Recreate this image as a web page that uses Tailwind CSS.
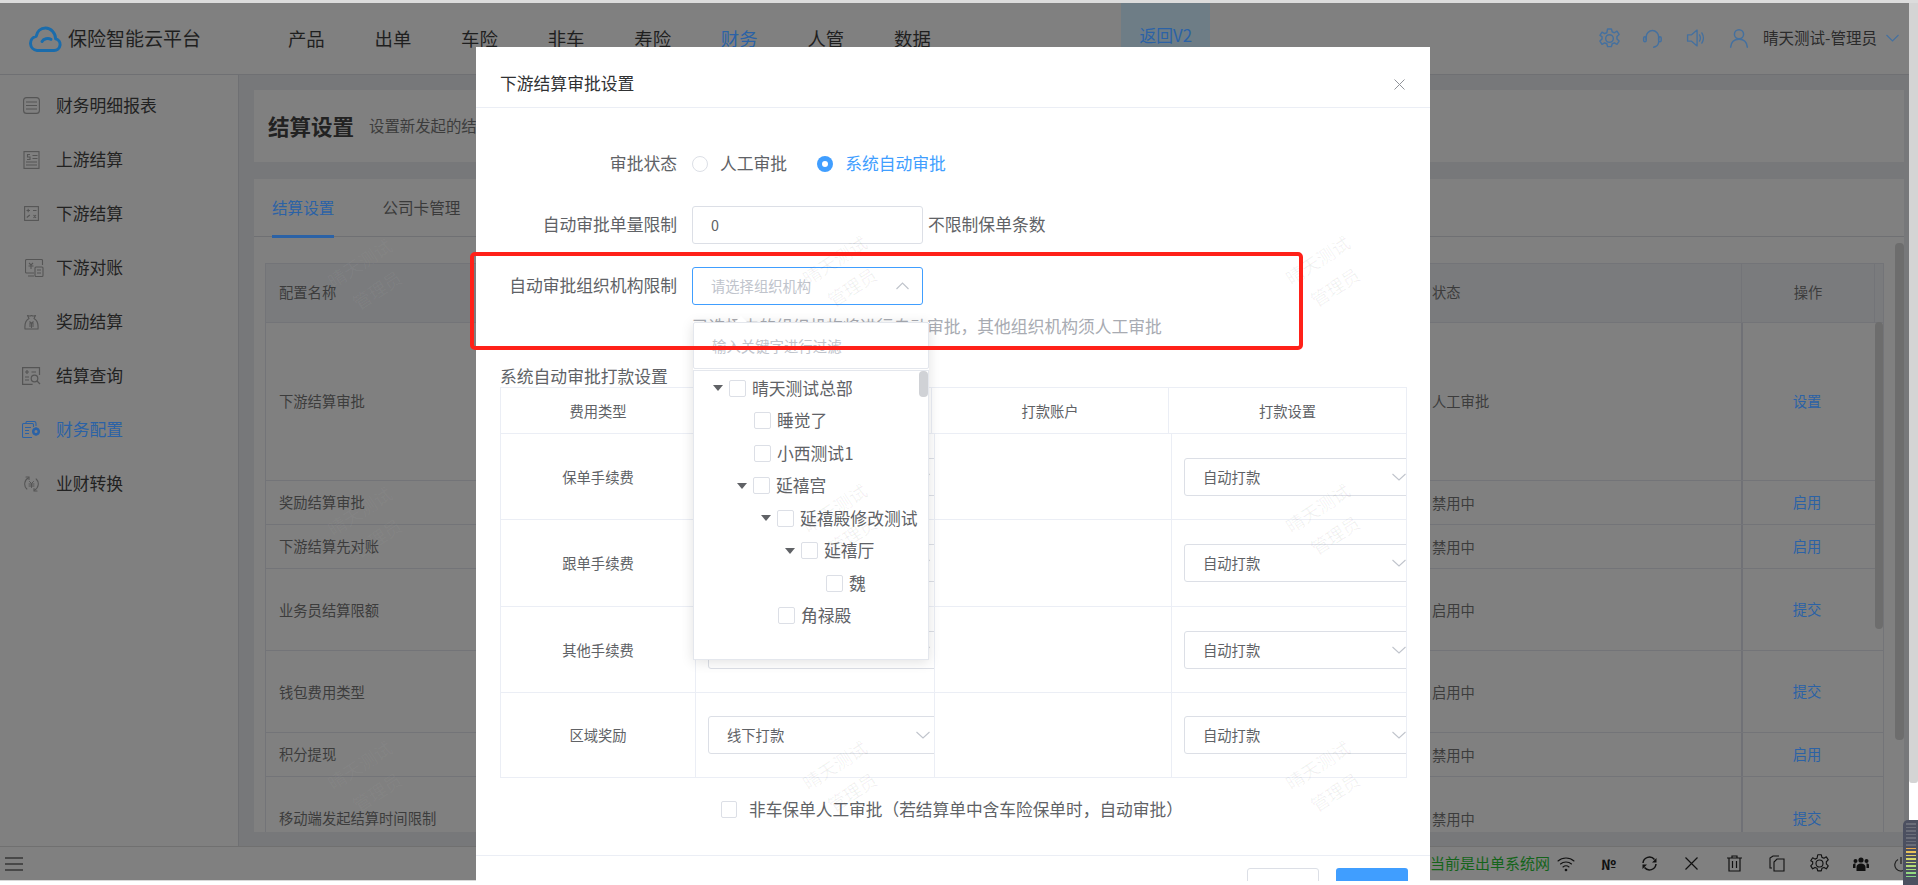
<!DOCTYPE html>
<html lang="zh">
<head>
<meta charset="utf-8">
<script src="https://cdn.jsdelivr.net/npm/@tailwindcss/browser@4"></script>
<title>下游结算审批设置</title>
</head>
<body class="font-['Noto_Sans_CJK_SC','Noto_Sans',sans-serif] bg-white">
<div class="relative w-[1918px] h-[885px] overflow-hidden bg-white">
  <div class="h-[3px] bg-[#dcdcdc]"></div>
  <div class="flex">
    <!-- dimmed page -->
    <div class="w-[1909px] h-[878px] flex flex-col bg-[#808080] border-b border-[#d8d8d8]">
      <!-- header -->
      <header class="h-[72px] shrink-0 flex items-start border-b border-[#6f7073]">
        <div class="w-[263px] h-[71px] flex items-center pl-[29px] gap-[6px]">
          <svg class="w-[33px] h-[26px]" viewBox="0 0 33 26" fill="none" stroke="#1b6cab" stroke-width="3" stroke-linejoin="round" stroke-linecap="round"><path d="M8 24.5h17a6 6 0 0 0 1.6-11.8C26.5 7 22 2 16.5 2 11.6 2 8 5.5 7.2 10.3A7.2 7.2 0 0 0 8 24.5z"/><path d="M13 15.5c1.5-2.8 6-3.6 9-2.2" /></svg>
          <span class="text-[19px] text-[#1f1f1f]">保险智能云平台</span>
        </div>
        <nav class="flex h-[71px] items-center text-[18.4px] text-[#1f1f1f]">
          <span class="w-[86.6px] text-center">产品</span>
          <span class="w-[86.6px] text-center">出单</span>
          <span class="w-[86.6px] text-center">车险</span>
          <span class="w-[86.6px] text-center">非车</span>
          <span class="w-[86.6px] text-center">寿险</span>
          <span class="w-[86.6px] text-center text-[#2b62a6]">财务</span>
          <span class="w-[86.6px] text-center">人管</span>
          <span class="w-[86.6px] text-center">数据</span>
        </nav>
        <div class="ml-[165px] w-[89px] h-[47px] bg-[#6e7d86] text-[#2b62a6] text-[16.8px] flex items-end justify-center pb-[2px] pl-[1px]">返回V2</div>
        <div class="ml-auto h-[71px] flex items-center pr-[10px] pb-[1px]">
          <svg class="w-[23px] h-[23px] mr-[21px]" viewBox="0 0 24 24" fill="none" stroke="#44709f" stroke-width="1.500" stroke-linejoin="round"><circle cx="12" cy="12" r="4"/><path d="M10 2h4l.8 3 2.3 1 2.7-1.600 2.200 3.400-2.200 2.200v2.500l2.200 2.200-2.200 3.400-2.700-1.600-2.300 1-.8 3h-4l-.8-3-2.300-1-2.700 1.600-2.200-3.400 2.200-2.200v-2.500L2 8.800 4.200 5.400 6.900 7l2.300-1z"/></svg>
          <svg class="w-[20px] h-[21px] mr-[24px]" viewBox="0 0 24 24" fill="none" stroke="#44709f" stroke-width="1.800" stroke-linecap="round"><path d="M5 13V10a7.500 7.500 0 0 1 15 0v3"/><rect x="2" y="10" width="3" height="6" rx="1.500"/><rect x="20" y="10" width="3" height="6" rx="1.500"/><path d="M20 16c0 3.500-3 6-6 6.500"/></svg>
          <svg class="w-[19px] h-[20px] mr-[24px]" viewBox="0 0 24 24" fill="none" stroke="#44709f" stroke-width="1.700" stroke-linejoin="round" stroke-linecap="round"><path d="M2 8h5l7-6v20l-7-6H2z"/><path d="M17 8c1.500 2.500 1.500 5.500 0 8M20 5.500c2.500 4 2.500 9 0 13"/></svg>
          <svg class="w-[20px] h-[20px] mr-[14px]" viewBox="0 0 24 24" fill="none" stroke="#44709f" stroke-width="1.800" stroke-linecap="round"><circle cx="12" cy="7.500" r="5.500"/><path d="M2 23c.5-6 4-9.500 10-9.500S21.500 17 22 23"/></svg>
          <span class="text-[15.5px] text-[#2a2a2a] mr-[9px]">晴天测试-管理员</span>
          <svg class="w-[13px] h-[8px]" viewBox="0 0 13 8" fill="none" stroke="#44709f" stroke-width="1.200"><path d="M.5 1l6 6 6-6"/></svg>
        </div>
      </header>
      <!-- middle -->
      <div class="flex h-[771px] shrink-0">
        <aside class="w-[239px] shrink-0 border-r border-[#6f7073] pt-[3.5px] text-[16.8px] text-[#222222]">
          <div class="h-[54px] flex items-center pl-[23px] gap-[16px]"><svg class="w-[17px] h-[17px]" viewBox="0 0 17 17" fill="none" stroke="#555" stroke-width="1.100"><rect x=".6" y=".6" width="15.800" height="15.800" rx="3"/><path d="M3 5h11M3 8.500h11M3 12h11"/></svg><span>财务明细报表</span></div>
          <div class="h-[54px] flex items-center pl-[23px] gap-[16px]"><svg class="w-[17px] h-[18px]" viewBox="0 0 17 18" fill="none" stroke="#555" stroke-width="1.100"><rect x="1" y=".6" width="15" height="16.800"/><path d="M9.500 4.500h5M9.500 7.500h5M3 11h11M3 14h11M7 3.500H4.500v2.500H7v2.500H4"/></svg><span>上游结算</span></div>
          <div class="h-[54px] flex items-center pl-[24px] gap-[17px]"><svg class="w-[15px] h-[15px]" viewBox="0 0 15 15" fill="none" stroke="#555" stroke-width="1.100"><rect x=".6" y=".6" width="13.800" height="13.800"/><path d="M2.500 4.500h3.500M4.200 2.800v3.400M9 4.500h3.500M2.800 11.500l3-2.500M9.500 9l2.500 2.800M12 9l-2.500 2.800"/></svg><span>下游结算</span></div>
          <div class="h-[54px] flex items-center pl-[25px] gap-[12px]"><svg class="w-[19px] h-[18px]" viewBox="0 0 19 18" fill="none" stroke="#555" stroke-width="1.100"><path d="M9 14H1.500a1 1 0 0 1-1-1V1.500a1 1 0 0 1 1-1h15a1 1 0 0 1 1 1V6M3 17h6"/><rect x="10" y="8" width="8" height="9.500" rx="1"/><path d="M12 11h4M12 14h4M4 4l2 2 2-2M3.500 7h5M6 6v4"/></svg><span>下游对账</span></div>
          <div class="h-[54px] flex items-center pl-[24px] gap-[17px]"><svg class="w-[15px] h-[16px]" viewBox="0 0 15 16" fill="none" stroke="#555" stroke-width="1.100" stroke-linejoin="round"><path d="M5 4.500 3.500 1.500c2 .8 2.500 .8 4 0 1.500 .8 2 .8 4 0L10 4.500c3 1.500 4.500 5 4 10.500H1C.5 9.500 2 6 5 4.500z"/><path d="M5.500 7.500l2 2 2-2M5 10h5M5 12h5M7.500 9.500V14"/></svg><span>奖励结算</span></div>
          <div class="h-[54px] flex items-center pl-[22px] gap-[15px]"><svg class="w-[19px] h-[18px]" viewBox="0 0 19 18" fill="none" stroke="#555" stroke-width="1.200"><path d="M17.500 8V.6H.6v16.800h10"/><path d="M3 5h4M5 3v4M9.500 5H14M3 10h4M3 13h4"/><circle cx="12.500" cy="11.500" r="3.300"/><path d="M15 14l3 3"/></svg><span>结算查询</span></div>
          <div class="h-[54px] flex items-center pl-[22px] gap-[15px] text-[#2b62a6]"><svg class="w-[19px] h-[18px]" viewBox="0 0 19 18" fill="none" stroke="#2b62a6" stroke-width="1.100"><path d="M10 16.500H1.500a1 1 0 0 1-1-1V3.500a1 1 0 0 1 1-1h9a1 1 0 0 1 1 1V6"/><path d="M4 2V1.500a1 1 0 0 1 1-1h7a2 2 0 0 1 2 2V5"/><path d="M3 6.500h6M3 9.500h4M3 12.500h4"/><circle cx="14" cy="10.500" r="2.700" stroke-width="2.400"/><path d="M14 6.500v1M14 13.500v1M10 10.500h1M17 10.500h1" stroke-width="1.800"/></svg><span>财务配置</span></div>
          <div class="h-[54px] flex items-center pl-[24px] gap-[17px]"><svg class="w-[15px] h-[16px]" viewBox="0 0 15 16" fill="none" stroke="#555" stroke-width="1.100" stroke-linecap="round"><path d="M4.500 1.800A7 7 0 0 0 2.800 13M10.500 14.200A7 7 0 0 0 12.200 3"/><path d="M2 1h3v2.500M13 15h-3v-2.500"/><path d="M5.500 5.500l2 2 2-2M5 8h5M5 10h5M7.500 8v3.500" stroke-width="1"/></svg><span>业财转换</span></div>
        </aside>
        <main class="flex-1 min-w-0 bg-[#77787a] pl-[15px] pr-[5px] pt-[15px] flex flex-col">
          <section class="h-[72px] shrink-0 bg-[#808080] flex items-center pl-[14px]">
            <h1 class="text-[21.5px] font-bold text-[#222222]">结算设置</h1>
            <p class="ml-[15px] text-[15.4px] text-[#3c3c3c]">设置新发起的结算单审批方式与相关规则</p>
          </section>
          <section class="mt-[17px] h-[653px] shrink-0 bg-[#808080] relative overflow-hidden">
            <div class="h-[58px] border-b border-[#6f7073] flex items-start pl-[18px] text-[15.6px] text-[#3a3a3a]">
              <span class="relative h-[58px] pt-[17px] text-[#2b62a6]">结算设置<i class="absolute left-0 right-0 bottom-[-1px] h-[3px] bg-[#2b62a6]"></i></span>
              <span class="ml-[48px] pt-[17px]">公司卡管理</span>
            </div>
            <div class="mt-[26px] ml-[11px] w-[1619px] border-l border-r border-t border-[#737478] text-[14.3px] text-[#3c3c3c]">
              <div class="grid grid-cols-[1166px_309px_133px_1fr] h-[59px] bg-[#7a7b7d] items-center border-b border-[#737478]">
                <span class="pl-[13px] pb-[2px]">配置名称</span><span class="pb-[2px]">状态</span><span class="text-center border-l border-[#737478] h-full flex items-center justify-center pb-[2px]">操作</span><span class="border-l border-[#737478] h-full"></span>
              </div>
              <div class="grid grid-cols-[1166px_309px_133px_1fr] h-[158px] items-center border-b border-[#737478]"><span class="pl-[13px] pb-[2px]">下游结算审批</span><span class="pb-[2px]">人工审批</span><span class="text-center text-[#2b62a6] border-l-2 border-[#707176] h-full flex items-center justify-center pb-[2px] pr-[3px]">设置</span></div>
              <div class="grid grid-cols-[1166px_309px_133px_1fr] h-[44px] items-center border-b border-[#737478]"><span class="pl-[13px] pb-[2px]">奖励结算审批</span><span>禁用中</span><span class="text-center text-[#2b62a6] border-l-2 border-[#707176] h-full flex items-center justify-center pb-[2px] pr-[3px]">启用</span></div>
              <div class="grid grid-cols-[1166px_309px_133px_1fr] h-[44px] items-center border-b border-[#737478]"><span class="pl-[13px] pb-[2px]">下游结算先对账</span><span>禁用中</span><span class="text-center text-[#2b62a6] border-l-2 border-[#707176] h-full flex items-center justify-center pb-[2px] pr-[3px]">启用</span></div>
              <div class="grid grid-cols-[1166px_309px_133px_1fr] h-[82px] items-center border-b border-[#737478]"><span class="pl-[13px]">业务员结算限额</span><span>启用中</span><span class="text-center text-[#2b62a6] border-l-2 border-[#707176] h-full flex items-center justify-center pb-[2px] pr-[3px]">提交</span></div>
              <div class="grid grid-cols-[1166px_309px_133px_1fr] h-[82px] items-center border-b border-[#737478]"><span class="pl-[13px]">钱包费用类型</span><span>启用中</span><span class="text-center text-[#2b62a6] border-l-2 border-[#707176] h-full flex items-center justify-center pb-[2px] pr-[3px]">提交</span></div>
              <div class="grid grid-cols-[1166px_309px_133px_1fr] h-[44px] items-center border-b border-[#737478]"><span class="pl-[13px] pb-[2px]">积分提现</span><span>禁用中</span><span class="text-center text-[#2b62a6] border-l-2 border-[#707176] h-full flex items-center justify-center pb-[2px] pr-[3px]">启用</span></div>
              <div class="grid grid-cols-[1166px_309px_133px_1fr] h-[84px] items-center"><span class="pl-[13px] pb-[2px]">移动端发起结算时间限制</span><span>禁用中</span><span class="text-center text-[#2b62a6] border-l-2 border-[#707176] h-full flex items-center justify-center pb-[2px] pr-[3px]">提交</span></div>
            </div>
            <div class="absolute left-[1621px] top-[143px] w-[8px] h-[307px] rounded-[4px] bg-[#6d6d6d]"></div>
            <div class="absolute left-[1641px] top-[64px] w-[9px] h-[497px] rounded-[4px] bg-[#6d6d6d]"></div>
          </section>
        </main>
      </div>
      <!-- bottom bar -->
      <footer class="h-[34px] shrink-0 border-t border-[#707070] flex items-center pl-[5px] pr-[1px] relative">
        <svg class="w-[18px] h-[14px]" viewBox="0 0 18 14" stroke="#111" stroke-width="1.200"><path d="M0 1h18M0 7h18M0 13h18"/></svg>
        <div class="ml-auto flex items-center">
          <span class="text-[15px] text-[#14641a] mr-[7px]">当前是出单系统网</span>
          <svg class="w-[18px] h-[16px] mr-[26px]" viewBox="0 0 18 16" fill="none" stroke="#111" stroke-width="1.100" stroke-linecap="round"><path d="M1 5c4.500-4 11.500-4 16 0M3.500 8c3-2.700 8-2.700 11 0M6 11c1.700-1.400 4.300-1.400 6 0"/><circle cx="9" cy="14" r=".8" fill="#111"/></svg>
          <span class="w-[16px] text-[14px] font-bold text-[#111] mr-[24px] leading-none">№</span>
          <svg class="w-[17px] h-[17px] mr-[27px]" viewBox="0 0 17 17" fill="none" stroke="#111" stroke-width="1.500"><path d="M2 8a6.500 6.500 0 0 1 11.500-3.500M15 9a6.500 6.500 0 0 1-11.500 3.500"/><path d="M15.500 3v4.500h-4.500zM1.500 14V9.500H6z" fill="#111" stroke="none"/></svg>
          <svg class="w-[13px] h-[13px] mr-[29px]" viewBox="0 0 13 13" stroke="#111" stroke-width="1.200"><path d="M.5.5l12 12M12.500.5l-12 12"/></svg>
          <svg class="w-[15px] h-[17px] mr-[27px]" viewBox="0 0 15 17" fill="none" stroke="#111" stroke-width="1.200"><path d="M0 3h15M5 3V1h5v2M2 3v13h11V3M5.500 6v7M9.500 6v7"/></svg>
          <svg class="w-[16px] h-[17px] mr-[24px]" viewBox="0 0 16 17" fill="none" stroke="#111" stroke-width="1.100"><path d="M3 13H1V3l3-2h6"/><path d="M5 16V7l3-3h7v12z"/></svg>
          <svg class="w-[21px] h-[21px] mr-[23px]" viewBox="0 0 24 24" fill="none" stroke="#111" stroke-width="1.300" stroke-linejoin="round"><circle cx="12" cy="12" r="4"/><path d="M10 2h4l.8 3 2.300 1 2.700-1.600 2.200 3.400-2.200 2.200v2.500l2.200 2.200-2.200 3.400-2.700-1.600-2.300 1-.8 3h-4l-.8-3-2.300-1-2.700 1.600-2.200-3.400 2.200-2.200v-2.500L2 8.800 4.200 5.400 6.900 7l2.300-1z"/></svg>
          <svg class="w-[16px] h-[14px] mr-[25px]" viewBox="0 0 16 14" fill="#111"><circle cx="8" cy="3" r="2.600"/><circle cx="2.500" cy="4" r="2"/><circle cx="13.500" cy="4" r="2"/><path d="M3.500 14v-4c0-2 2-3.500 4.500-3.500s4.500 1.500 4.500 3.500v4zM0 11V8c0-1 1-1.800 2.500-1.800v4.800zM16 11V8c0-1-1-1.800-2.500-1.800v4.800z"/></svg>
          <svg class="w-[14px] h-[16px]" viewBox="0 0 14 16" fill="none" stroke="#222" stroke-width="1.200"><path d="M4 3.500a6.200 6.200 0 1 0 6 0"/><path d="M7 1v7"/></svg>
        </div>
      </footer>
    </div>
    <div class="w-[9px] h-[780px] bg-[#d4d4d4] rounded-b-[3px]"></div>
  </div>

  <!-- level meter widget -->
  <div class="absolute left-[1903px] top-[820px] w-[15px] h-[65px] rounded-tl-[5px] bg-[#4c5060] pl-[3px] pt-[3px] flex flex-col gap-[2px]">
    <i class="block h-[1.500px] w-[10px] bg-[#6a6d78]"></i><i class="block h-[1.500px] w-[10px] bg-[#6a6d78]"></i><i class="block h-[1.500px] w-[10px] bg-[#6a6d78]"></i><i class="block h-[1.500px] w-[10px] bg-[#6a6d78]"></i><i class="block h-[1.500px] w-[10px] bg-[#6a6d78]"></i><i class="block h-[1.500px] w-[10px] bg-[#6a6d78]"></i><i class="block h-[1.500px] w-[10px] bg-[#6a6d78]"></i>
    <i class="block h-[1.500px] w-[10px] bg-[#e9a94a]"></i><i class="block h-[1.500px] w-[10px] bg-[#e9c25a]"></i><i class="block h-[1.500px] w-[10px] bg-[#e0cf64]"></i><i class="block h-[1.500px] w-[10px] bg-[#d5d86c]"></i><i class="block h-[1.500px] w-[10px] bg-[#c8dc72]"></i><i class="block h-[1.500px] w-[10px] bg-[#b4dc78]"></i><i class="block h-[1.500px] w-[10px] bg-[#a4dc7c]"></i><i class="block h-[1.500px] w-[10px] bg-[#94da80]"></i><i class="block h-[1.500px] w-[10px] bg-[#86d886]"></i>
  </div>

  <!-- watermarks on the page behind -->
  <div class="absolute left-[318px] top-[244px] w-[100px] -rotate-[33deg] text-center text-[18px] leading-[32px] text-white/[0.04] pointer-events-none">晴天测试<br>管理员</div>
  <div class="absolute left-[318px] top-[492px] w-[100px] -rotate-[33deg] text-center text-[18px] leading-[32px] text-white/[0.04] pointer-events-none">晴天测试<br>管理员</div>
  <div class="absolute left-[318px] top-[746px] w-[100px] -rotate-[33deg] text-center text-[18px] leading-[32px] text-white/[0.04] pointer-events-none">晴天测试<br>管理员</div>

  <!-- modal -->
  <div class="absolute left-[476px] top-[47px] w-[954px] h-[834px] bg-white flex flex-col overflow-hidden text-[16.8px] text-[#606266]">
    <div class="h-[61px] shrink-0 border-b border-[#ebeef5] flex items-center justify-between pl-[24px] pr-[25px] pt-[14px]">
      <span class="text-[#303133]">下游结算审批设置</span>
      <svg class="w-[11px] h-[11px]" viewBox="0 0 11 11" stroke="#909399" stroke-width="1"><path d="M.5.5l10 10M10.500.5l-10 10"/></svg>
    </div>
    <div class="mt-[37px] h-[38px] shrink-0 flex items-center">
      <span class="w-[201px] text-right">审批状态</span>
      <span class="ml-[15px] w-[16px] h-[16px] rounded-full border border-[#dcdfe6] bg-white"></span>
      <span class="ml-[12px]">人工审批</span>
      <span class="ml-[30px] w-[16px] h-[16px] rounded-full bg-[#409eff] flex items-center justify-center"><i class="block w-[6px] h-[6px] rounded-full bg-white"></i></span>
      <span class="ml-[12px] text-[#409eff]">系统自动审批</span>
    </div>
    <div class="mt-[23px] h-[38px] shrink-0 flex items-center">
      <span class="w-[201px] text-right">自动审批单量限制</span>
      <div class="ml-[15px] w-[231px] h-[38px] rounded-[3px] border border-[#dcdfe6] pl-[18px] flex items-center text-[14.3px]">0</div>
      <span class="ml-[5px]">不限制保单条数</span>
    </div>
    <div class="mt-[23px] h-[38px] shrink-0 flex items-center">
      <span class="w-[201px] text-right">自动审批组织机构限制</span>
      <div class="ml-[15px] w-[231px] h-[38px] rounded-[3px] border border-[#409eff] pl-[18px] pr-[13px] flex items-center justify-between text-[14.3px] text-[#c0c4cc]">
        <span>请选择组织机构</span>
        <svg class="w-[13px] h-[8px]" viewBox="0 0 13 8" fill="none" stroke="#c0c4cc" stroke-width="1.200"><path d="M.5 7l6-6 6 6"/></svg>
      </div>
    </div>
    <p class="mt-[9px] h-[24px] shrink-0 ml-[216px] leading-[24px] text-[#a8abb2]">已选择中的组织机构将进行自动审批，其他组织机构须人工审批</p>
    <p class="mt-[27px] h-[22px] shrink-0 ml-[24px] leading-[22px]">系统自动审批打款设置</p>
    <!-- table -->
    <div class="ml-[24px] w-[907px] shrink-0 text-[14.3px] border-t border-l border-[#ebeef5]">
      <div class="grid grid-cols-[195px_236px_237px_238px] h-[46px] items-center text-center border-b border-[#ebeef5]">
        <span class="h-full flex items-center justify-center border-r border-[#ebeef5]">费用类型</span>
        <span class="h-full flex items-center justify-center border-r border-[#ebeef5]">打款方式</span>
        <span class="h-full flex items-center justify-center border-r border-[#ebeef5]">打款账户</span>
        <span class="h-full flex items-center justify-center border-r border-[#ebeef5]">打款设置</span>
      </div>
      <div class="grid grid-cols-[195px_239px_237px_235px] h-[86px] border-b border-[#ebeef5]">
        <span class="flex items-center justify-center border-r border-[#ebeef5]">保单手续费</span>
        <div class="border-r border-[#ebeef5] overflow-hidden pl-[12px] flex items-center"><div class="w-[231px] shrink-0 h-[38px] rounded-[3px] border border-[#dcdfe6] pl-[18px] pr-[8px] flex items-center justify-between"><span>线下打款</span><svg class="w-[14px] h-[8px]" viewBox="0 0 14 8" fill="none" stroke="#c0c4cc" stroke-width="1.100"><path d="M.5 1l6.500 6 6.500-6"/></svg></div></div>
        <span class="border-r border-[#ebeef5]"></span>
        <div class="border-r border-[#ebeef5] overflow-hidden pl-[12px] flex items-center"><div class="w-[231px] shrink-0 h-[38px] rounded-[3px] border border-[#dcdfe6] pl-[18px] pr-[8px] flex items-center justify-between"><span>自动打款</span><svg class="w-[14px] h-[8px]" viewBox="0 0 14 8" fill="none" stroke="#c0c4cc" stroke-width="1.100"><path d="M.5 1l6.500 6 6.500-6"/></svg></div></div>
      </div>
      <div class="grid grid-cols-[195px_239px_237px_235px] h-[87px] border-b border-[#ebeef5]">
        <span class="flex items-center justify-center border-r border-[#ebeef5]">跟单手续费</span>
        <div class="border-r border-[#ebeef5] overflow-hidden pl-[12px] flex items-center"><div class="w-[231px] shrink-0 h-[38px] rounded-[3px] border border-[#dcdfe6] pl-[18px] pr-[8px] flex items-center justify-between"><span>线下打款</span><svg class="w-[14px] h-[8px]" viewBox="0 0 14 8" fill="none" stroke="#c0c4cc" stroke-width="1.100"><path d="M.5 1l6.500 6 6.500-6"/></svg></div></div>
        <span class="border-r border-[#ebeef5]"></span>
        <div class="border-r border-[#ebeef5] overflow-hidden pl-[12px] flex items-center"><div class="w-[231px] shrink-0 h-[38px] rounded-[3px] border border-[#dcdfe6] pl-[18px] pr-[8px] flex items-center justify-between"><span>自动打款</span><svg class="w-[14px] h-[8px]" viewBox="0 0 14 8" fill="none" stroke="#c0c4cc" stroke-width="1.100"><path d="M.5 1l6.500 6 6.500-6"/></svg></div></div>
      </div>
      <div class="grid grid-cols-[195px_239px_237px_235px] h-[86px] border-b border-[#ebeef5]">
        <span class="flex items-center justify-center border-r border-[#ebeef5]">其他手续费</span>
        <div class="border-r border-[#ebeef5] overflow-hidden pl-[12px] flex items-center"><div class="w-[231px] shrink-0 h-[38px] rounded-[3px] border border-[#dcdfe6] pl-[18px] pr-[8px] flex items-center justify-between"><span>线下打款</span><svg class="w-[14px] h-[8px]" viewBox="0 0 14 8" fill="none" stroke="#c0c4cc" stroke-width="1.100"><path d="M.5 1l6.500 6 6.500-6"/></svg></div></div>
        <span class="border-r border-[#ebeef5]"></span>
        <div class="border-r border-[#ebeef5] overflow-hidden pl-[12px] flex items-center"><div class="w-[231px] shrink-0 h-[38px] rounded-[3px] border border-[#dcdfe6] pl-[18px] pr-[8px] flex items-center justify-between"><span>自动打款</span><svg class="w-[14px] h-[8px]" viewBox="0 0 14 8" fill="none" stroke="#c0c4cc" stroke-width="1.100"><path d="M.5 1l6.500 6 6.500-6"/></svg></div></div>
      </div>
      <div class="grid grid-cols-[195px_239px_237px_235px] h-[85px] border-b border-[#ebeef5]">
        <span class="flex items-center justify-center border-r border-[#ebeef5]">区域奖励</span>
        <div class="border-r border-[#ebeef5] overflow-hidden pl-[12px] flex items-center"><div class="w-[231px] shrink-0 h-[38px] rounded-[3px] border border-[#dcdfe6] pl-[18px] pr-[8px] flex items-center justify-between"><span>线下打款</span><svg class="w-[14px] h-[8px]" viewBox="0 0 14 8" fill="none" stroke="#c0c4cc" stroke-width="1.100"><path d="M.5 1l6.500 6 6.500-6"/></svg></div></div>
        <span class="border-r border-[#ebeef5]"></span>
        <div class="border-r border-[#ebeef5] overflow-hidden pl-[12px] flex items-center"><div class="w-[231px] shrink-0 h-[38px] rounded-[3px] border border-[#dcdfe6] pl-[18px] pr-[8px] flex items-center justify-between"><span>自动打款</span><svg class="w-[14px] h-[8px]" viewBox="0 0 14 8" fill="none" stroke="#c0c4cc" stroke-width="1.100"><path d="M.5 1l6.500 6 6.500-6"/></svg></div></div>
      </div>
    </div>
    <div class="mt-[23px] h-[17px] shrink-0 flex items-center pl-[245px]">
      <span class="w-[16px] h-[17px] rounded-[2px] border border-[#dcdfe6]"></span>
      <span class="ml-[12px] text-[16.7px]">非车保单人工审批（若结算单中含车险保单时，自动审批）</span>
    </div>
    <div class="mt-[37px] shrink-0 border-t border-[#ebeef5] flex justify-end pt-[12px] pr-[22px] gap-[17px]">
      <div class="w-[72px] h-[38px] rounded-[3px] border border-[#dcdfe6]"></div>
      <div class="w-[72px] h-[38px] rounded-[3px] bg-[#409eff]"></div>
    </div>

    <!-- tree-select dropdown -->
    <div class="absolute left-[217px] top-[275px] w-[236px] h-[338px] shadow-[0_2px_12px_rgba(0,0,0,0.12)] bg-white">
      <i class="absolute left-[42px] -top-[6px] w-0 h-0 border-x-[6px] border-x-transparent border-b-[6px] border-b-white"></i>
      <div class="h-[47px] border border-[#e4e7ed] rounded-[2px] flex items-center pl-[18px] text-[14.4px] text-[#c0c4cc]">输入关键字进行过滤</div>
      <div class="relative mt-[1px] h-[290px] border border-[#e4e7ed] pt-[1px] text-[#606266]">
        <div class="absolute right-0 top-0 w-[9px] h-[26px] rounded-[4px] bg-[#d0d2d6]"></div>
        <div class="h-[32.500px] flex items-center pl-[19px]"><i class="w-0 h-0 border-x-[5.500px] border-x-transparent border-t-[6px] border-t-[#606266]"></i><span class="ml-[6px] w-[17px] h-[17px] rounded-[2px] border border-[#dcdfe6]"></span><span class="ml-[6px]">晴天测试总部</span></div>
        <div class="h-[32.500px] flex items-center pl-[60px]"><span class="w-[17px] h-[17px] rounded-[2px] border border-[#dcdfe6]"></span><span class="ml-[6px]">睡觉了</span></div>
        <div class="h-[32.500px] flex items-center pl-[60px]"><span class="w-[17px] h-[17px] rounded-[2px] border border-[#dcdfe6]"></span><span class="ml-[6px]">小西测试1</span></div>
        <div class="h-[32.500px] flex items-center pl-[43px]"><i class="w-0 h-0 border-x-[5.500px] border-x-transparent border-t-[6px] border-t-[#606266]"></i><span class="ml-[6px] w-[17px] h-[17px] rounded-[2px] border border-[#dcdfe6]"></span><span class="ml-[6px]">延禧宫</span></div>
        <div class="h-[32.500px] flex items-center pl-[67px]"><i class="w-0 h-0 border-x-[5.500px] border-x-transparent border-t-[6px] border-t-[#606266]"></i><span class="ml-[6px] w-[17px] h-[17px] rounded-[2px] border border-[#dcdfe6]"></span><span class="ml-[6px]">延禧殿修改测试</span></div>
        <div class="h-[32.500px] flex items-center pl-[91px]"><i class="w-0 h-0 border-x-[5.500px] border-x-transparent border-t-[6px] border-t-[#606266]"></i><span class="ml-[6px] w-[17px] h-[17px] rounded-[2px] border border-[#dcdfe6]"></span><span class="ml-[6px]">延禧厅</span></div>
        <div class="h-[32.500px] flex items-center pl-[132px]"><span class="w-[17px] h-[17px] rounded-[2px] border border-[#dcdfe6]"></span><span class="ml-[6px]">魏</span></div>
        <div class="h-[32.500px] flex items-center pl-[84px]"><span class="w-[17px] h-[17px] rounded-[2px] border border-[#dcdfe6]"></span><span class="ml-[6px]">角禄殿</span></div>
      </div>
    </div>

    <!-- watermarks over modal -->
    <div class="absolute left-[317px] top-[194px] w-[100px] -rotate-[33deg] text-center text-[18px] leading-[32px] text-black/[0.06] pointer-events-none">晴天测试<br>管理员</div>
    <div class="absolute left-[800px] top-[194px] w-[100px] -rotate-[33deg] text-center text-[18px] leading-[32px] text-black/[0.06] pointer-events-none">晴天测试<br>管理员</div>
    <div class="absolute left-[317px] top-[442px] w-[100px] -rotate-[33deg] text-center text-[18px] leading-[32px] text-black/[0.06] pointer-events-none">晴天测试<br>管理员</div>
    <div class="absolute left-[800px] top-[442px] w-[100px] -rotate-[33deg] text-center text-[18px] leading-[32px] text-black/[0.06] pointer-events-none">晴天测试<br>管理员</div>
    <div class="absolute left-[317px] top-[699px] w-[100px] -rotate-[33deg] text-center text-[18px] leading-[32px] text-black/[0.06] pointer-events-none">晴天测试<br>管理员</div>
    <div class="absolute left-[800px] top-[699px] w-[100px] -rotate-[33deg] text-center text-[18px] leading-[32px] text-black/[0.06] pointer-events-none">晴天测试<br>管理员</div>
  </div>

  <!-- red annotation -->
  <div class="absolute left-[470px] top-[252px] w-[833px] h-[98px] rounded-[5px] border-4 border-[#ff2119] pointer-events-none"></div>
</div>
</body>
</html>
